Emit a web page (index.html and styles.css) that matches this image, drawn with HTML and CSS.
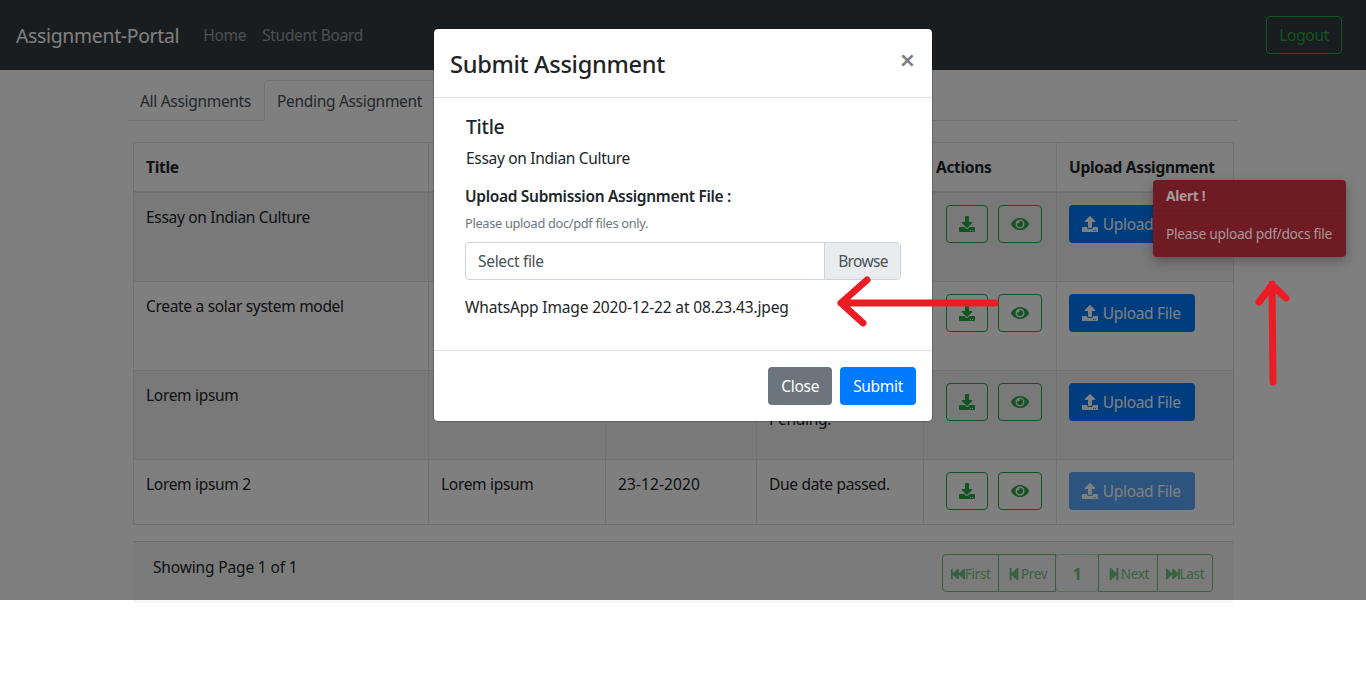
FILE: index.html
```html
<!DOCTYPE html>
<html lang="en">
<head>
    <meta charset="UTF-8">
    <meta name="viewport" content="width=device-width, initial-scale=1.0">
    <title>Assignment-Portal</title>
    <link rel="stylesheet" href="styles.css">
</head>
<body>
    <svg class="icon-defs" width="0" height="0">
        <symbol id="i-download" viewBox="0 0 512 512"><path d="M216 0h80c13.3 0 24 10.7 24 24v168h87.7c17.8 0 26.7 21.5 14.1 34.1L269.7 378.3c-7.5 7.5-19.8 7.5-27.3 0L90.1 226.1c-12.6-12.6-3.7-34.1 14.1-34.1H192V24c0-13.3 10.7-24 24-24zm296 376v112c0 13.3-10.7 24-24 24H24c-13.3 0-24-10.7-24-24V376c0-13.3 10.7-24 24-24h146.7l49 49c20.1 20.1 52.5 20.1 72.6 0l49-49H488c13.3 0 24 10.7 24 24zm-124 88c0-11-9-20-20-20s-20 9-20 20 9 20 20 20 20-9 20-20zm64 0c0-11-9-20-20-20s-20 9-20 20 9 20 20 20 20-9 20-20z"/></symbol>
        <symbol id="i-upload" viewBox="0 0 512 512"><path d="M296 384h-80c-13.3 0-24-10.7-24-24V192h-87.7c-17.8 0-26.7-21.5-14.1-34.1L242.3 5.7c7.5-7.5 19.8-7.5 27.3 0l152.2 152.2c12.6 12.6 3.7 34.1-14.1 34.1H320v168c0 13.3-10.7 24-24 24zm216-8v112c0 13.3-10.7 24-24 24H24c-13.3 0-24-10.7-24-24V376c0-13.3 10.7-24 24-24h136v8c0 30.9 25.1 56 56 56h80c30.9 0 56-25.1 56-56v-8h136c13.3 0 24 10.7 24 24zm-124 88c0-11-9-20-20-20s-20 9-20 20 9 20 20 20 20-9 20-20zm64 0c0-11-9-20-20-20s-20 9-20 20 9 20 20 20 20-9 20-20z"/></symbol>
        <symbol id="i-eye" viewBox="0 0 576 512"><path d="M572.52 241.4C518.29 135.59 410.93 64 288 64S57.68 135.64 3.48 241.41a32.35 32.35 0 0 0 0 29.19C57.71 376.41 165.07 448 288 448s230.32-71.64 284.52-177.41a32.35 32.35 0 0 0 0-29.19zM288 400a144 144 0 1 1 144-144 143.93 143.93 0 0 1-144 144zm0-240a95.31 95.31 0 0 0-25.31 3.79 47.85 47.85 0 0 1-66.9 66.9A95.78 95.78 0 1 0 288 160z"/></symbol>
        <symbol id="i-first" viewBox="0 0 512 512"><path d="M0 436V76c0-6.6 5.4-12 12-12h40c6.6 0 12 5.4 12 12v151.9L235.5 71.4C256.1 54.3 288 68.6 288 96v131.9L459.5 71.4C480.1 54.3 512 68.6 512 96v320c0 27.4-31.9 41.7-52.5 24.6L288 285.3V416c0 27.4-31.9 41.7-52.5 24.6L64 285.3V436c0 6.6-5.4 12-12 12H12c-6.6 0-12-5.4-12-12z"/></symbol>
        <symbol id="i-prev" viewBox="0 0 448 512"><path d="M64 468V44c0-6.6 5.4-12 12-12h48c6.6 0 12 5.4 12 12v176.4l195.5-181C352.1 22.3 384 36.6 384 64v384c0 27.4-31.9 41.7-52.5 24.6L136 292.7V468c0 6.6-5.4 12-12 12H76c-6.6 0-12-5.4-12-12z"/></symbol>
        <symbol id="i-next" viewBox="0 0 448 512"><path d="M384 44v424c0 6.6-5.4 12-12 12h-48c-6.6 0-12-5.4-12-12V291.6l-195.5 181C95.9 489.7 64 475.4 64 448V64c0-27.4 31.9-41.7 52.5-24.6L312 219.3V44c0-6.6 5.4-12 12-12h48c6.6 0 12 5.4 12 12z"/></symbol>
        <symbol id="i-last" viewBox="0 0 512 512"><path d="M512 76v360c0 6.6-5.4 12-12 12h-40c-6.6 0-12-5.4-12-12V284.1L276.5 440.6c-20.6 17.2-52.5 2.8-52.5-24.6V284.1L52.5 440.6C31.9 457.8 0 443.4 0 416V96c0-27.4 31.9-41.7 52.5-24.6L224 226.8V96c0-27.4 31.9-41.7 52.5-24.6L448 226.8V76c0-6.6 5.4-12 12-12h40c6.6 0 12 5.4 12 12z"/></symbol>
    </svg>

    <nav class="navbar">
        <a class="brand" href="#">Assignment-Portal</a>
        <a class="nav-link" href="#">Home</a>
        <a class="nav-link" href="#">Student Board</a>
        <button class="btn btn-outline logout">Logout</button>
    </nav>

    <div class="container">
        <div class="tabs">
            <a class="tab" href="#">All Assignments</a>
            <a class="tab active" href="#">Pending Assignment</a>
        </div>

        <div class="card">
            <table class="table">
                <thead>
                    <tr>
                        <th class="col-title">Title</th>
                        <th class="col-desc">Description</th>
                        <th class="col-date">Due Date</th>
                        <th class="col-status">Status</th>
                        <th class="col-actions">Actions</th>
                        <th class="col-upload">Upload Assignment</th>
                    </tr>
                </thead>
                <tbody>
                    <tr>
                        <td>Essay on Indian Culture</td>
                        <td>Lorem ipsum</td>
                        <td class="cell-date">28-12-2020</td>
                        <td><p>Submission<br>Pending.</p></td>
                        <td>
                            <div class="action-btns">
                                <button class="btn btn-outline icon-btn"><svg class="icon"><use href="#i-download"/></svg></button>
                                <button class="btn btn-outline icon-btn"><svg class="icon eye"><use href="#i-eye"/></svg></button>
                            </div>
                        </td>
                        <td><button class="btn btn-primary"><svg class="icon"><use href="#i-upload"/></svg> Upload File</button></td>
                    </tr>
                    <tr>
                        <td>Create a solar system model</td>
                        <td>Lorem ipsum</td>
                        <td class="cell-date">28-12-2020</td>
                        <td><p>Submission<br>Pending.</p></td>
                        <td>
                            <div class="action-btns">
                                <button class="btn btn-outline icon-btn"><svg class="icon"><use href="#i-download"/></svg></button>
                                <button class="btn btn-outline icon-btn"><svg class="icon eye"><use href="#i-eye"/></svg></button>
                            </div>
                        </td>
                        <td><button class="btn btn-primary"><svg class="icon"><use href="#i-upload"/></svg> Upload File</button></td>
                    </tr>
                    <tr>
                        <td>Lorem ipsum</td>
                        <td>Lorem ipsum</td>
                        <td class="cell-date">28-12-2020</td>
                        <td><p>Submission<br>Pending.</p></td>
                        <td>
                            <div class="action-btns">
                                <button class="btn btn-outline icon-btn"><svg class="icon"><use href="#i-download"/></svg></button>
                                <button class="btn btn-outline icon-btn"><svg class="icon eye"><use href="#i-eye"/></svg></button>
                            </div>
                        </td>
                        <td><button class="btn btn-primary"><svg class="icon"><use href="#i-upload"/></svg> Upload File</button></td>
                    </tr>
                    <tr>
                        <td>Lorem ipsum 2</td>
                        <td>Lorem ipsum</td>
                        <td class="cell-date">23-12-2020</td>
                        <td><p>Due date passed.</p></td>
                        <td>
                            <div class="action-btns">
                                <button class="btn btn-outline icon-btn"><svg class="icon"><use href="#i-download"/></svg></button>
                                <button class="btn btn-outline icon-btn"><svg class="icon eye"><use href="#i-eye"/></svg></button>
                            </div>
                        </td>
                        <td><button class="btn btn-primary disabled"><svg class="icon"><use href="#i-upload"/></svg> Upload File</button></td>
                    </tr>
                </tbody>
            </table>

            <div class="card-footer">
                <span class="page-info">Showing Page 1 of 1</span>
                <div class="pager">
                    <a class="page-btn"><svg class="icon"><use href="#i-first"/></svg>First</a>
                    <a class="page-btn"><svg class="icon"><use href="#i-prev"/></svg>Prev</a>
                    <a class="page-btn current">1</a>
                    <a class="page-btn"><svg class="icon"><use href="#i-next"/></svg>Next</a>
                    <a class="page-btn"><svg class="icon"><use href="#i-last"/></svg>Last</a>
                </div>
            </div>
        </div>
    </div>

    <div class="backdrop"></div>

    <div class="toast">
        <div class="toast-header">Alert !</div>
        <div class="toast-body">Please upload pdf/docs file</div>
    </div>

    <div class="modal">
        <div class="modal-header">
            <h4>Submit Assignment</h4>
            <span class="close">&times;</span>
        </div>
        <div class="modal-body">
            <h5>Title</h5>
            <p class="modal-text">Essay on Indian Culture</p>
            <label class="upload-label">Upload Submission Assignment File :</label>
            <small class="hint">Please upload doc/pdf files only.</small>
            <div class="file-input">
                <span class="file-name">Select file</span>
                <span class="browse">Browse</span>
            </div>
            <p class="chosen">WhatsApp Image 2020-12-22 at 08.23.43.jpeg</p>
        </div>
        <div class="modal-footer">
            <button class="btn btn-secondary">Close</button>
            <button class="btn btn-submit">Submit</button>
        </div>
    </div>

    <!-- red arrows drawn on top of the screenshot -->
    <svg class="arrows" width="1366" height="680">
        <path d="M995 303H841M867 280L841 303L863 323"/>
        <path d="M1273 382L1272 284M1259 302L1272 285L1286 298"/>
    </svg>
</body>
</html>
```

FILE: styles.css
```css
* {
    box-sizing: border-box;
}
body {
    margin: 0;
    font-family: "Noto Sans", sans-serif;
    font-size: 15.5px;
    line-height: 24px;
    color: #212529;
    background: #fff;
    letter-spacing: -0.02em;
}
a {
    text-decoration: none;
}
.icon-defs {
    position: absolute;
}
.icon {
    width: 16px;
    height: 16px;
    fill: currentColor;
    vertical-align: -2px;
}
.icon.eye {
    width: 18px;
}

.navbar {
    display: flex;
    align-items: center;
    height: 70px;
    padding: 16px;
    background: #343a40;
}
.brand {
    padding-top: 1px;
    font-size: 19.4px;
    color: #fff;
    margin-right: 16px;
}
.nav-link {
    padding: 8px;
    color: rgba(255, 255, 255, .5);
}
.btn {
    display: inline-block;
    height: 38px;
    padding: 6px 12px;
    font: inherit;
    letter-spacing: inherit;
    border: 1px solid transparent;
    border-radius: 4px;
    white-space: nowrap;
}
.btn-outline {
    color: #28a745;
    background: transparent;
    border-color: #28a745;
}
.logout {
    margin-left: auto;
    margin-right: 8px;
}
.btn-primary {
    padding-right: 13px;
    color: #fff;
    background: #007bff;
}
.btn-primary .icon {
    margin-right: 1px;
}
.btn-primary.disabled {
    opacity: .65;
}
.btn-secondary {
    color: #fff;
    background: #6c757d;
}
.btn-submit {
    color: #fff;
    background: #007bff;
}

.container {
    width: 1140px;
    margin: 0 auto;
    padding: 10px 15px 0;
}
.tabs {
    display: flex;
    height: 41px;
    border-bottom: 1px solid #dee2e6;
}
.tab {
    height: 41px;
    padding: 8px 12px 8px 11px;
    color: #495057;
    border: 1px solid transparent;
    border-radius: 4px 4px 0 0;
}
.tab.active {
    padding-left: 12px;
    background: #fff;
    border-color: #dee2e6 #dee2e6 #fff;
}

.card {
    margin: 21px 5px 0;
}
.table {
    width: 1100px;
    table-layout: fixed;
    border-collapse: collapse;
    margin-bottom: 16px;
}
.table th,
.table td {
    padding: 12px;
    border: 1px solid #dee2e6;
    text-align: left;
    vertical-align: top;
    white-space: nowrap;
}
.table th {
    font-weight: 700;
    border-bottom-width: 2px;
}
.table tbody tr:nth-child(odd) {
    background: rgba(0, 0, 0, .05);
}
.table p {
    margin: 0 0 16px;
}
.col-title { width: 295px; }
.col-desc { width: 177px; }
.col-date { width: 151px; }
.col-status { width: 167px; }
.col-actions { width: 133px; }
.col-upload { width: 177px; }
.table .cell-date {
    letter-spacing: 0.1px;
}
.action-btns {
    display: flex;
    gap: 10px;
    margin-left: 10px;
}
.icon-btn {
    width: 42px;
    padding: 6px 0;
    text-align: center;
}
.icon-btn + .icon-btn {
    width: 44px;
}

.card-footer {
    display: flex;
    justify-content: space-between;
    height: 62px;
    padding: 12px 20px;
    background: #f7f7f7;
    border-top: 1px solid rgba(0, 0, 0, .125);
}
.page-info {
    padding-top: 1px;
    letter-spacing: -0.01em;
}
.pager {
    display: flex;
    height: 38px;
    opacity: .65;
}
.page-btn {
    display: flex;
    align-items: center;
    justify-content: center;
    height: 38px;
    padding: 1px 7.7px 0;
    margin-left: -1px;
    font-size: 13.5px;
    color: #28a745;
    border: 1px solid #28a745;
}
.page-btn:first-child {
    border-radius: 4px 0 0 4px;
}
.page-btn:last-child {
    border-radius: 0 4px 4px 0;
}
.page-btn .icon {
    width: 14px;
    height: 14px;
}
.page-btn.current {
    width: 44px;
    font-weight: 700;
    font-size: 15.5px;
    border-radius: 4px;
    border-color: rgba(40, 167, 69, .5);
}

.toast {
    position: absolute;
    left: 1153px;
    top: 180px;
    width: 193px;
    height: 77px;
    font-size: 13.8px;
    line-height: 21px;
    color: #a8999a;
    background: #6e1b23;
    border-radius: 4px;
    box-shadow: 0 4px 12px rgba(0, 0, 0, .3);
    white-space: nowrap;
}
.toast-header {
    height: 31px;
    padding: 5px 13px;
    font-weight: 700;
    border-bottom: 1px solid rgba(0, 0, 0, .05);
}
.toast-body {
    padding: 12px 13px;
}

.backdrop {
    position: absolute;
    left: 0;
    top: 0;
    width: 100%;
    height: 600px;
    background: rgba(0, 0, 0, .5);
}

.modal {
    position: absolute;
    left: 433px;
    top: 28px;
    width: 500px;
    height: 394px;
    background: #fff;
    border: 1px solid rgba(0, 0, 0, .2);
    border-radius: 5px;
    background-clip: padding-box;
}
.modal-header {
    display: flex;
    justify-content: space-between;
    height: 69px;
    padding: 17px 16px 0;
    border-bottom: 1px solid #dee2e6;
}
.modal-header h4 {
    margin: 0;
    font-size: 23.6px;
    line-height: 36px;
    font-weight: 500;
}
.close {
    margin-top: -1px;
    margin-right: 1px;
    font-size: 27px;
    line-height: 30px;
    font-weight: 600;
    color: #808080;
}
.modal-body {
    height: 252px;
    padding: 14px 31px;
}
.modal-body h5 {
    margin: 0;
    padding-left: 1px;
    font-size: 19.4px;
    line-height: 30px;
    font-weight: 500;
}
.modal-text {
    margin: 4px 0 0;
    padding-left: 1px;
}
.upload-label {
    display: block;
    margin-top: 14px;
    font-weight: 600;
}
.hint {
    display: block;
    margin-top: 6px;
    font-size: 12.8px;
    line-height: 18px;
    color: #6c757d;
}
.file-input {
    display: flex;
    justify-content: space-between;
    height: 38px;
    margin-top: 10px;
    border: 1px solid #ced4da;
    border-radius: 4px;
    color: #495057;
}
.file-name {
    padding: 6px 12px;
}
.browse {
    padding: 6px 12px 6px 13px;
    letter-spacing: -0.04em;
    background: #e9ecef;
    border-left: 1px solid #ced4da;
    border-radius: 0 3px 3px 0;
}
.chosen {
    margin: 15px 0 0;
    letter-spacing: -0.01em;
}
.modal-footer {
    display: flex;
    justify-content: flex-end;
    gap: 8px;
    padding: 16px;
    border-top: 1px solid #dee2e6;
}

.arrows {
    position: absolute;
    left: 0;
    top: 0;
    fill: none;
    stroke: #ed1c24;
    stroke-width: 7;
    stroke-linecap: round;
    stroke-linejoin: round;
    pointer-events: none;
}
```
